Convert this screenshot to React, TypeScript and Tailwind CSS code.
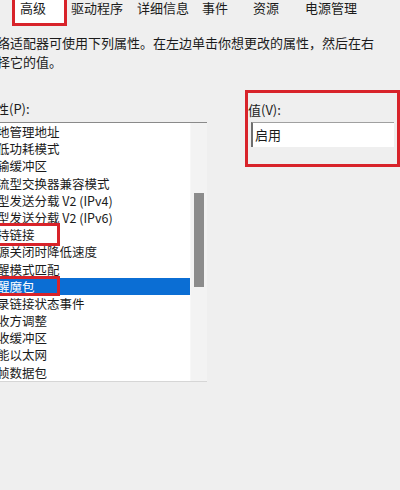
import React from "react";

const items = [
  "地管理地址",
  "低功耗模式",
  "输缓冲区",
  "流型交换器兼容模式",
  "型发送分载 V2 (IPv4)",
  "型发送分载 V2 (IPv6)",
  "持链接",
  "源关闭时降低速度",
  "醒模式匹配",
  "醒魔包",
  "录链接状态事件",
  "收方调整",
  "收缓冲区",
  "能以太网",
  "帧数据包",
];

export default function App() {
  return (
    <div
      className="w-[400px] h-[490px] bg-[#efefef] overflow-hidden text-[#1b1b1b]"
      style={{ fontFamily: '"Noto Sans CJK SC", "Noto Sans", sans-serif' }}
    >
      {/* Tabs */}
      <div className="flex items-start h-[26px] text-[13px] leading-[15px]">
        <div className="ml-[12px] w-[55px] h-[26px] border-[3px] border-t-0 border-[#d8232a] bg-white pl-[5px]">
          <span className="block">高级</span>
        </div>
        <span className="ml-[4px]">驱动程序</span>
        <span className="ml-[14px]">详细信息</span>
        <span className="ml-[13px]">事件</span>
        <span className="ml-[25px]">资源</span>
        <span className="ml-[26px]">电源管理</span>
      </div>

      {/* Description */}
      <div className="mt-[7px] -ml-[3px] text-[13px] leading-[19px] whitespace-nowrap">
        <div>络适配器可使用下列属性。在左边单击你想更改的属性，然后在右</div>
        <div>择它的值。</div>
      </div>

      {/* Main area */}
      <div className="flex items-start mt-[19px]">
        {/* Left: property list */}
        <div className="w-[207px] shrink-0 pt-[10px]">
          <div className="-ml-[4px] text-[13px] leading-[17px] whitespace-nowrap">性(P):</div>
          <div className="relative mt-[5px] -ml-[10px] w-[217px] border-t border-b border-[#8a8a8a] border-b-[#d6d6d6] flex">
            <div className="flex-1 bg-white">
              {items.map((t, i) => (
                <div
                  key={i}
                  className={
                    i === 9
                      ? "h-[17.2px] leading-[17.2px] pl-[7px] text-[12.5px] whitespace-nowrap bg-[#0b6ed4] text-white"
                      : "h-[17.2px] leading-[17.2px] pl-[7px] text-[12.5px] whitespace-nowrap"
                  }
                >
                  {t}
                </div>
              ))}
            </div>
            <div className="w-[17px] bg-[#f3f3f3] border-l border-[#f7f7f7]">
              <div className="ml-[3px] mt-[70px] w-[10px] h-[94px] bg-[#8c8c8c]" />
            </div>
            {/* annotation boxes */}
            <div className="absolute left-[4px] top-[100px] w-[66px] h-[23px] border-[3px] border-[#d8232a]" />
            <div className="absolute left-[4px] top-[153px] w-[66px] h-[20px] border-[3px] border-[#d8232a]" />
          </div>
        </div>

        {/* Right: value */}
        <div className="ml-[38px] w-[155px] shrink-0 border-[3px] border-[#d8232a] pt-[8px] pb-[17px]">
          <div className="text-[13px] leading-[17px] whitespace-nowrap">值(V):</div>
          <div className="mt-[4px] ml-[3px] w-[143px] h-[25px] bg-white border-t border-[#a0a0a0] border-l-2 border-l-[#6f6f6f] pl-[2px] text-[13px] leading-[24px]">
            启用
          </div>
        </div>
      </div>
    </div>
  );
}
